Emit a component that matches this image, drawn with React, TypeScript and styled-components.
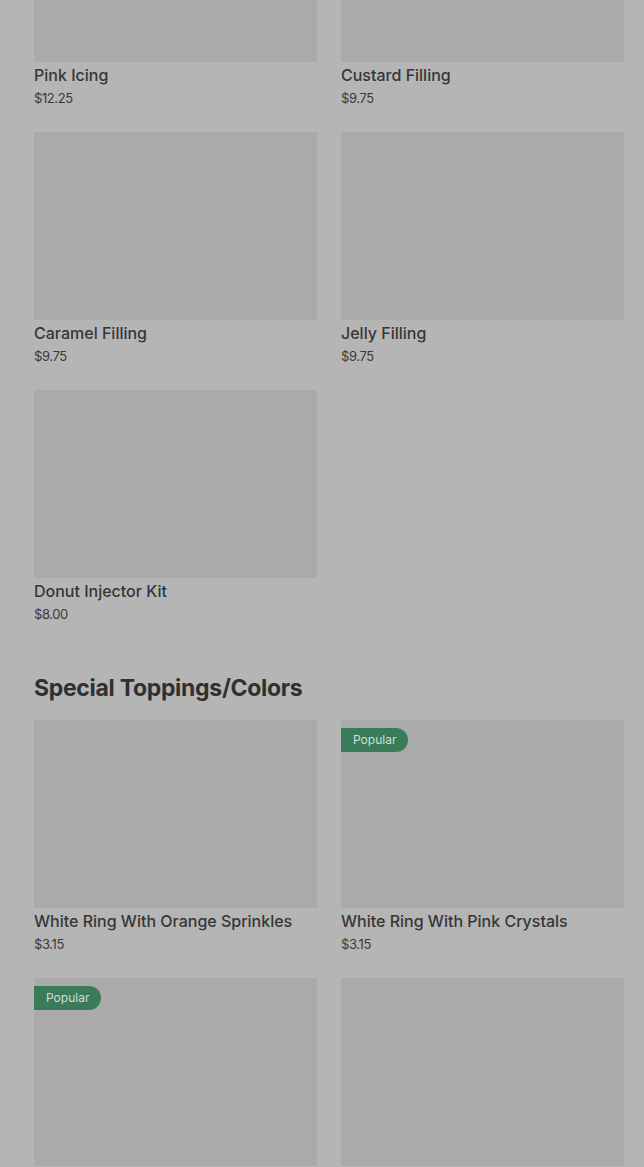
import React from 'react';
import styled, { createGlobalStyle } from 'styled-components';

interface IProduct {
  name: string;
  price: string;
  popular?: boolean;
}

interface ISection {
  title?: string;
  items: IProduct[];
}

const sections: ISection[] = [
  {
    items: [
      { name: 'Pink Icing', price: '$12.25' },
      { name: 'Custard Filling', price: '$9.75' },
      { name: 'Caramel Filling', price: '$9.75' },
      { name: 'Jelly Filling', price: '$9.75' },
      { name: 'Donut Injector Kit', price: '$8.00' },
    ],
  },
  {
    title: 'Special Toppings/Colors',
    items: [
      { name: 'White Ring With Orange Sprinkles', price: '$3.15' },
      { name: 'White Ring With Pink Crystals', price: '$3.15', popular: true },
      { name: 'White Ring With Blue Sprinkles', price: '$3.15', popular: true },
      { name: 'Chocolate Ring With Rainbow Sprinkles', price: '$3.15' },
    ],
  },
];

function ProductCard(props: IProduct) {
  return (
    <Card>
      <Photo>
        { props.popular && <Badge>Popular</Badge> }
      </Photo>
      <Name>{ props.name }</Name>
      <Price>{ props.price }</Price>
    </Card>
  );
}

export default function App() {
  return (
    <>
      <GlobalStyle/>
      <Page>
        { sections.map((section, i) => (
          <Section key={ i }>
            { section.title && <Heading>{ section.title }</Heading> }
            <Grid>
              { section.items.map((item) => (
                <ProductCard key={ item.name } { ...item }/>
              )) }
            </Grid>
          </Section>
        )) }
      </Page>
    </>
  );
}

const GlobalStyle = createGlobalStyle`
  html, body {
    margin: 0;
    padding: 0;
    background: #b5b5b5;
    overflow: hidden;
  }
  body {
    font-family: Inter, "Noto Sans", sans-serif;
    color: #333333;
  }
`;

// the list is scrolled part way down
const Page = styled.main`
  margin-top: -126px;
  padding: 0 20px 0 34px;
  display: flex;
  flex-direction: column;
  gap: 47px;
`;

const Section = styled.section`
  display: flex;
  flex-direction: column;
`;

const Heading = styled.h2`
  margin: 0 0 16px;
  font-family: Inter, sans-serif;
  font-size: 23px;
  font-weight: 700;
  line-height: 32px;
  letter-spacing: -0.3px;
  color: #303030;
`;

const Grid = styled.div`
  display: grid;
  grid-template-columns: 1fr 1fr;
  column-gap: 24px;
  row-gap: 23px;
`;

const Card = styled.div`
  display: flex;
  flex-direction: column;
`;

const Photo = styled.div`
  position: relative;
  height: 188px;
  margin-bottom: 1px;
  background: #aaaaaa;
`;

const Badge = styled.span`
  position: absolute;
  top: 8px;
  left: 0;
  height: 24px;
  padding: 0 12px;
  border-radius: 0 12px 12px 0;
  background: #3a7b59;
  color: #d6dcd8;
  font-size: 12px;
  line-height: 24px;
`;

const Name = styled.div`
  font-size: 16px;
  font-weight: 500;
  line-height: 24px;
  color: #363636;
`;

const Price = styled.div`
  font-size: 13px;
  line-height: 22px;
  letter-spacing: -0.4px;
  color: #3a3a3a;
`;
